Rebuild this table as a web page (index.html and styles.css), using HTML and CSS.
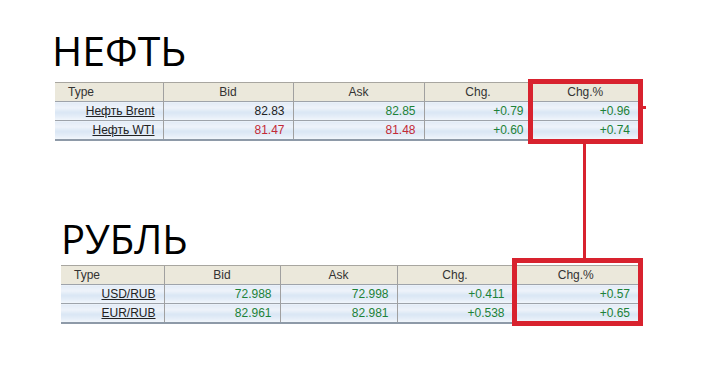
FILE: index.html
```html
<!DOCTYPE html>
<html lang="ru">
<head>
<meta charset="utf-8">
<title>Нефть и рубль</title>
<link rel="stylesheet" href="styles.css">
</head>
<body>
<div class="page">
  <section class="block block-oil">
    <h1 class="title title-oil">НЕФТЬ</h1>
    <table class="quotes quotes-oil">
      <colgroup><col class="c1"><col class="c2"><col class="c3"><col class="c4"><col class="c5"></colgroup>
      <thead>
        <tr><th class="th-type">Type</th><th>Bid</th><th>Ask</th><th>Chg.</th><th>Chg.%</th></tr>
      </thead>
      <tbody>
        <tr><td class="name"><a href="#">Нефть Brent</a></td><td>82.83</td><td class="up">82.85</td><td class="up">+0.79</td><td class="up">+0.96</td></tr>
        <tr><td class="name"><a href="#">Нефть WTI</a></td><td class="down">81.47</td><td class="down">81.48</td><td class="up">+0.60</td><td class="up">+0.74</td></tr>
      </tbody>
    </table>
  </section>
  <section class="block block-rub">
    <h1 class="title title-rub">РУБЛЬ</h1>
    <table class="quotes quotes-rub">
      <colgroup><col class="c1"><col class="c2"><col class="c3"><col class="c4"><col class="c5"></colgroup>
      <thead>
        <tr><th class="th-type">Type</th><th>Bid</th><th>Ask</th><th>Chg.</th><th>Chg.%</th></tr>
      </thead>
      <tbody>
        <tr><td class="name"><a href="#">USD/RUB</a></td><td class="up">72.988</td><td class="up">72.998</td><td class="up">+0.411</td><td class="up">+0.57</td></tr>
        <tr><td class="name"><a href="#">EUR/RUB</a></td><td class="up">82.961</td><td class="up">82.981</td><td class="up">+0.538</td><td class="up">+0.65</td></tr>
      </tbody>
    </table>
  </section>
  <div class="mark mark-oil"></div>
  <div class="mark mark-rub"></div>
  <div class="connector"></div>
  <div class="tick"></div>
</div>
</body>
</html>
```

FILE: styles.css
```css
html, body {
  margin: 0;
  padding: 0;
  background: #fff;
}
.page {
  position: relative;
  width: 705px;
  height: 389px;
  padding-top: 29px;
  box-sizing: border-box;
  font-family: "Liberation Sans", Arial, sans-serif;
}
.title {
  margin: 0;
  font-family: "Open Sans", sans-serif;
  font-weight: 400;
  color: #000;
}
.title-oil {
  font-size: 41px;
  line-height: 42px;
  margin-left: 52px;
}
.title-rub {
  font-size: 40px;
  line-height: 40px;
  margin-left: 61px;
}
.block-rub {
  margin-top: 78px;
}
.quotes {
  border-collapse: collapse;
  table-layout: fixed;
  font-size: 12px;
  color: #222;
}
.quotes-oil {
  margin: 11px 0 0 55px;
  width: 583px;
}
.quotes-rub {
  margin: 6px 0 0 61px;
  width: 577px;
}
.quotes-oil .c1 { width: 108px; }
.quotes-oil .c2 { width: 130px; }
.quotes-oil .c3 { width: 131px; }
.quotes-oil .c4 { width: 108px; }
.quotes-oil .c5 { width: 106px; }
.quotes-rub .c1 { width: 103px; }
.quotes-rub .c2 { width: 116px; }
.quotes-rub .c3 { width: 117px; }
.quotes-rub .c4 { width: 116px; }
.quotes-rub .c5 { width: 125px; }
.quotes th {
  height: 18px;
  padding: 0 8px;
  background: #ebe8db;
  border-top: 1px solid #a8a6a0;
  border-left: 1px solid #a0a0a0;
  font-weight: 400;
  text-align: center;
  color: #333;
  white-space: nowrap;
}
.quotes th.th-type {
  text-align: left;
  padding-left: 13px;
  border-left: 0;
}
.quotes td {
  height: 18px;
  padding: 0 8px;
  border-top: 1px solid #9ea3aa;
  border-left: 1px solid #a0a0a0;
  text-align: right;
  white-space: nowrap;
  background: linear-gradient(#e2ebf6 0%, #eef3fa 30%, #d9e6f4 55%, #e6eef8 80%, #f3f7fc 100%);
}
.quotes td.name {
  border-left: 0;
}
.quotes tbody tr:last-child td {
  border-bottom: 2px solid #8e9aa8;
}
.quotes a {
  color: #222;
  text-decoration: underline;
}
.quotes .up { color: #1d8238; }
.quotes .down { color: #c32a36; }

.mark {
  position: absolute;
  border: 5px solid #d8222e;
  box-sizing: border-box;
}
.mark-oil {
  left: 528px;
  top: 79px;
  width: 115px;
  height: 65px;
}
.mark-rub {
  left: 512px;
  top: 258px;
  width: 131px;
  height: 68px;
}
.connector {
  position: absolute;
  left: 583px;
  top: 144px;
  width: 3px;
  height: 114px;
  background: #d8222e;
}
.tick {
  position: absolute;
  left: 643px;
  top: 106px;
  width: 3px;
  height: 3px;
  background: #d8222e;
}
```
